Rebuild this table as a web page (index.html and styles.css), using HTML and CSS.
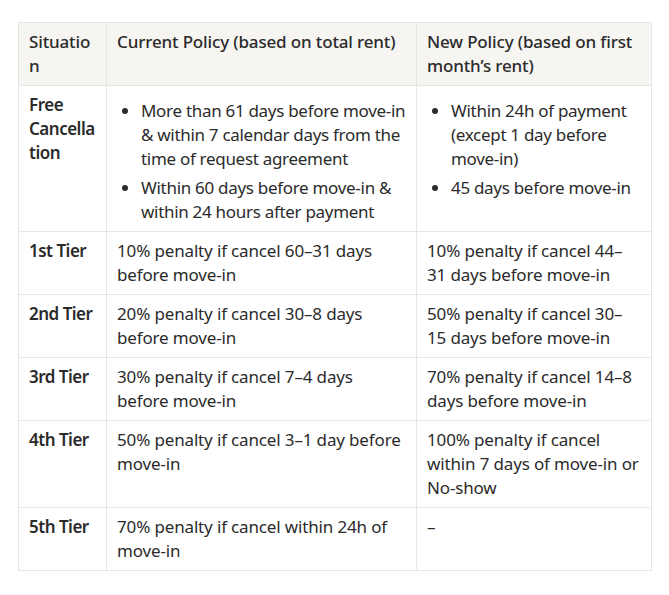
FILE: index.html
```html
<!DOCTYPE html>
<html lang="en">
<head>
<meta charset="utf-8">
<title>Cancellation Policy</title>
<link rel="stylesheet" href="styles.css">
</head>
<body>
<table class="policy">
  <colgroup>
    <col class="c1">
    <col class="c2">
    <col class="c3">
  </colgroup>
  <thead>
    <tr>
      <th>Situation</th>
      <th>Current Policy (based on total rent)</th>
      <th>New Policy (based on first month’s rent)</th>
    </tr>
  </thead>
  <tbody>
    <tr>
      <td class="label">Free Cancellation</td>
      <td class="list-cell">
        <ul class="list">
          <li>More than 61 days before move-in &amp; within 7 calendar days from the time of request agreement</li>
          <li>Within 60 days before move-in &amp; within 24 hours after payment</li>
        </ul>
      </td>
      <td class="list-cell">
        <ul class="list">
          <li>Within 24h of payment (except 1 day before move-in)</li>
          <li>45 days before move-in</li>
        </ul>
      </td>
    </tr>
    <tr>
      <td class="label">1st Tier</td>
      <td>10% penalty if cancel 60–31 days before move-in</td>
      <td>10% penalty if cancel 44–31 days before move-in</td>
    </tr>
    <tr>
      <td class="label">2nd Tier</td>
      <td>20% penalty if cancel 30–8 days before move-in</td>
      <td>50% penalty if cancel 30–15 days before move-in</td>
    </tr>
    <tr>
      <td class="label">3rd Tier</td>
      <td>30% penalty if cancel 7–4 days before move-in</td>
      <td>70% penalty if cancel 14–8 days before move-in</td>
    </tr>
    <tr>
      <td class="label">4th Tier</td>
      <td>50% penalty if cancel 3–1 day before move-in</td>
      <td>100% penalty if cancel within 7 days of move-in or No-show</td>
    </tr>
    <tr>
      <td class="label">5th Tier</td>
      <td>70% penalty if cancel within 24h of move-in</td>
      <td>–</td>
    </tr>
  </tbody>
</table>
</body>
</html>
```

FILE: styles.css
```css
html, body {
  margin: 0;
  padding: 0;
  background: #ffffff;
}

body {
  padding: 22px 18px;
  font-family: "Noto Sans", "Open Sans", sans-serif;
  font-size: 17px;
  line-height: 24px;
  letter-spacing: -0.15px;
  color: #2b2b2b;
}

.policy {
  border-collapse: collapse;
  table-layout: fixed;
  width: 633px;
}

.c1 { width: 88px; }
.c2 { width: 310px; }
.c3 { width: 235px; }

.policy th,
.policy td {
  border: 1px solid #e6e6e4;
  padding: 7px 10px;
  vertical-align: top;
  text-align: left;
  overflow-wrap: anywhere;
}

.policy th {
  background: #f6f5f2;
  font-weight: 500;
}

.policy td.label {
  font-weight: 600;
  letter-spacing: -0.5px;
  padding-right: 5px;
}

.policy td.list-cell {
  padding-right: 6px;
}

.list {
  margin: 6px 0 0;
  padding-left: 24px;
  letter-spacing: -0.3px;
}

.list li + li {
  margin-top: 5px;
}
```
